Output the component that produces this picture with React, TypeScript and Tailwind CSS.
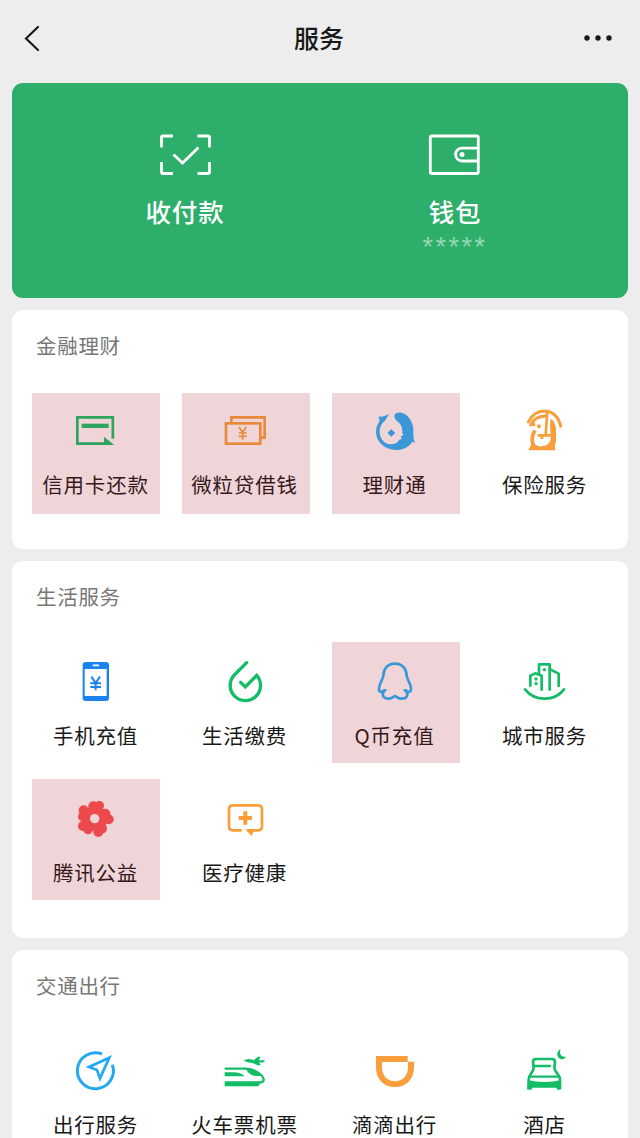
import type { ReactNode } from 'react';

type Service = {
  label: string;
  icon: ReactNode;
  highlighted?: boolean;
};

const GREEN = '#12bd66';
const ORANGE = '#fa9d3b';

function Glyph({ children }: { children: ReactNode }) {
  return (
    <svg className="block size-12 shrink-0" viewBox="0 0 144 144" fill="none">
      {children}
    </svg>
  );
}

function CreditCardIcon() {
  return (
    <Glyph>
      <path d="M125.500 95V31H19V110H112" stroke="#2fa45f" strokeWidth="8" />
      <path d="M32 50H113V63H32Z" fill="#2fa45f" />
      <path d="M99 89L130 114H99Z" fill="#2fa45f" />
    </Glyph>
  );
}

function LoanIcon() {
  return (
    <Glyph>
      <path d="M34 46V31H134V92H123" stroke="#e88a3a" strokeWidth="8" />
      <rect x="18" y="49" width="103" height="61" stroke="#e88a3a" strokeWidth="8" />
      <path d="M57 60L68 76L79 60M68 76V98M56 78H80M56 88H80" stroke="#e88a3a" strokeWidth="5" />
    </Glyph>
  );
}

function WealthIcon() {
  return (
    <Glyph>
      <path
        d="M26 28C36 32 47 26 57 21L45 41C34 49 28 62 29 77C31 99 46 112 65 112C76 111 84 106 87 99L95 96L92 88L101 84L97 79C98 64 95 56 88 48C80 41 70 33 74 23C79 14 94 15 105 22C120 32 129 48 130 67C130 84 129 94 135 108L127 104C117 120 99 129 78 129C45 129 19 106 18 76C18 62 22 51 29 43Z"
        fill="#3a97d8"
      />
      <path d="M64 68L74 78L64 88L54 78Z" fill="#3a97d8" stroke="#3a97d8" strokeWidth="3" strokeLinejoin="round" />
    </Glyph>
  );
}

function InsuranceIcon() {
  return (
    <Glyph>
      <path
        d="M88 32C101 38 108 52 108 68V106C103 113 104 120 107 130H26C26 122 33 119 33 111C29 94 31 80 40 68L50 72C43 84 40 98 43 107C47 116 56 119 66 118C80 117 90 108 92 96V86Z"
        fill={ORANGE}
      />
      <path d="M25 45C36 22 54 12 74 12C99 13 117 31 122 58" stroke={ORANGE} strokeWidth="9" strokeLinecap="round" />
      <path d="M33 53C38 40 52 28 76 27" stroke={ORANGE} strokeWidth="9" strokeLinecap="round" />
      <path d="M27 58L46 57L44 44L34 48Z" fill={ORANGE} />
      <circle cx="57" cy="58" r="6" fill={ORANGE} />
      <path d="M90 31L84 80" stroke="white" strokeWidth="5" />
      <path d="M82 14L77 84M53 85H92M66 85V96" stroke={ORANGE} strokeWidth="8" />
    </Glyph>
  );
}

function PhoneTopUpIcon() {
  return (
    <Glyph>
      <rect x="35" y="12" width="79" height="117" rx="9" fill="#1b83ee" />
      <path d="M41 33H107V114H41Z" fill="white" />
      <path d="M67 22H82" stroke="white" strokeWidth="5" strokeLinecap="round" />
      <path d="M61 56L74 75L87 56M74 75V97M58 76H90M58 87H90" stroke="#1b83ee" strokeWidth="6" />
    </Glyph>
  );
}

function UtilitiesIcon() {
  return (
    <Glyph>
      <path
        d="M80 14L43 51A45.500 45.500 0 1 0 110 52L76 87L62 73"
        stroke={GREEN}
        strokeWidth="10"
        strokeLinecap="round"
      />
    </Glyph>
  );
}

function QCoinIcon() {
  return (
    <Glyph>
      <path
        d="M46 97H42C35 104 27 103 27 93C27 76 39 65 40 53C40 32 53 17 75 17C97 17 110 32 110 53C111 65 123 76 123 93C123 103 115 104 108 97H104M42 99C34 111 40 122 56 122C66 122 69 116 75 114C81 116 84 122 95 122C111 122 116 111 108 99"
        stroke="#3a97d8"
        strokeWidth="8"
        strokeLinecap="round"
        strokeLinejoin="round"
      />
    </Glyph>
  );
}

function CityIcon() {
  return (
    <Glyph>
      <g stroke={GREEN} strokeWidth="8" strokeLinecap="round" strokeLinejoin="round">
        <path d="M15 94C44 131 104 131 132 94" />
        <path d="M31 83V53L46 46L65 53V95" />
        <path d="M57 46V19H89V95" />
        <path d="M92 35L116 47V84" />
      </g>
      <g fill={GREEN}>
        <circle cx="48" cy="63" r="5" />
        <circle cx="48" cy="77" r="5" />
        <circle cx="73" cy="35" r="5" />
      </g>
    </Glyph>
  );
}

function CharityIcon() {
  return (
    <Glyph>
      <g fill="#ec4a4c">
        <circle cx="72" cy="70" r="38" />
        <circle cx="67" cy="34" r="15" />
        <circle cx="85" cy="32" r="14" />
        <circle cx="103" cy="56" r="15" />
        <circle cx="113" cy="73" r="15" />
        <circle cx="94" cy="101" r="14" />
        <circle cx="82" cy="111" r="15" />
        <circle cx="51" cy="104" r="14" />
        <circle cx="36" cy="93" r="15" />
        <circle cx="35" cy="65" r="14" />
        <circle cx="38" cy="46" r="15" />
      </g>
      <circle cx="71" cy="71" r="14" fill="#efd5d7" />
    </Glyph>
  );
}

function MedicalIcon() {
  return (
    <Glyph>
      <path
        d="M65 106H39Q27 106 27 94V43Q27 31 39 31H114Q126 31 126 43V94Q126 106 114 106H82"
        stroke={ORANGE}
        strokeWidth="8"
      />
      <path d="M76 103L95 123L101 106Z" fill={ORANGE} />
      <path d="M76 49V89M56 69H96" stroke={ORANGE} strokeWidth="12" />
    </Glyph>
  );
}

function TravelIcon() {
  return (
    <Glyph>
      <path d="M93 21A54 54 0 1 0 124 53" stroke="#22a9f2" strokeWidth="9" />
      <path d="M115 32L54 60L78 69L87 94Z" stroke="#22a9f2" strokeWidth="8" />
    </Glyph>
  );
}

function TrainIcon() {
  return (
    <Glyph>
      <path d="M14 65H78C104 67 128 82 131 97C132 106 120 108 104 108" stroke={GREEN} strokeWidth="7" />
      <path d="M14 103H122L116 118H14Z" fill={GREEN} />
      <path d="M14 76H40C55 76 66 80 74 88H14Z" fill={GREEN} />
      <path d="M78 66C94 62 112 71 122 86C104 90 86 84 78 66Z" fill={GREEN} />
      <path d="M70 40L86 36L102 39L114 29L122 29L116 40L134 40C135 46 126 47 118 46L122 55L112 55L98 48L82 46Z" fill={GREEN} />
    </Glyph>
  );
}

function DidiIcon() {
  return (
    <Glyph>
      <path
        d="M18 27H113V44H132V62C132 96 108 120 75 120C42 120 18 96 18 62ZM36 45V60C36 86 52 103 75 103C98 103 114 86 114 60V45Z"
        fill={ORANGE}
        fillRule="evenodd"
      />
    </Glyph>
  );
}

function HotelIcon() {
  return (
    <Glyph>
      <path
        d="M26 126V97C26 84 41 74 41 62L39 45Q39 36 49 36H96Q105 36 105 45L103 62C103 74 120 84 120 97V126"
        stroke={GREEN}
        strokeWidth="8"
      />
      <path d="M42 57H90M28 89H118" stroke={GREEN} strokeWidth="7" strokeLinecap="round" />
      <path d="M24 99C50 107 96 107 122 99V128H112L109 122H37L34 128H22Z" fill={GREEN} />
      <path d="M122 7C108 12 108 34 124 37C130 37 135 34 138 29C125 32 116 21 122 7Z" fill={GREEN} />
    </Glyph>
  );
}

const finance: Service[] = [
  { label: '信用卡还款', icon: <CreditCardIcon />, highlighted: true },
  { label: '微粒贷借钱', icon: <LoanIcon />, highlighted: true },
  { label: '理财通', icon: <WealthIcon />, highlighted: true },
  { label: '保险服务', icon: <InsuranceIcon /> },
];

const living: Service[] = [
  { label: '手机充值', icon: <PhoneTopUpIcon /> },
  { label: '生活缴费', icon: <UtilitiesIcon /> },
  { label: 'Q币充值', icon: <QCoinIcon />, highlighted: true },
  { label: '城市服务', icon: <CityIcon /> },
  { label: '腾讯公益', icon: <CharityIcon />, highlighted: true },
  { label: '医疗健康', icon: <MedicalIcon /> },
];

const transport: Service[] = [
  { label: '出行服务', icon: <TravelIcon /> },
  { label: '火车票机票', icon: <TrainIcon /> },
  { label: '滴滴出行', icon: <DidiIcon /> },
  { label: '酒店', icon: <HotelIcon /> },
];

function ServiceTile({ service, compact }: { service: Service; compact?: boolean }) {
  return (
    <div
      className={`flex h-[121px] flex-col items-center pr-1 nth-[4n+1]:pr-0.5 ${
        compact ? 'pt-3.5' : 'pt-4'
      } ${service.highlighted ? 'bg-[#efd5d7] text-[#37191d]' : 'text-[#191919]'}`}
    >
      {service.icon}
      <span className="mt-[17px] ml-px text-[20.500px] leading-6 tracking-[0.8px] whitespace-nowrap">
        {service.label}
      </span>
    </div>
  );
}

function ServiceSection({
  title,
  services,
  className,
  compact,
}: {
  title: string;
  services: Service[];
  className: string;
  compact?: boolean;
}) {
  return (
    <section className={`mt-3 bg-white px-5 pt-5 ${className}`}>
      <h2 className="pl-1 text-[20.500px] leading-[30px] tracking-[0.7px] text-[#777]">{title}</h2>
      <div
        className={`grid grid-cols-[repeat(4,128px)] gap-x-[22px] gap-y-4 ${
          compact ? 'mt-[33px]' : 'mt-[31px]'
        }`}
      >
        {services.map((service) => (
          <ServiceTile key={service.label} service={service} compact={compact} />
        ))}
      </div>
    </section>
  );
}

export default function App() {
  return (
    <main className="h-[1138px] w-[640px] overflow-hidden bg-[#ededed] px-3 font-['Noto_Sans_CJK_SC',sans-serif]">
      <header className="flex h-[83px] items-start justify-between pt-[17px]">
        <svg className="ml-[11px] h-10 w-5" viewBox="0 0 20 40" fill="none">
          <path d="M15 10L3 21.500L15 33" stroke="#191919" strokeWidth="2.200" strokeLinecap="round" />
        </svg>
        <h1 className="ml-[11px] text-[25px] leading-10 font-medium text-[#191919]">服务</h1>
        <svg className="mr-4 h-10 w-7" viewBox="0 0 28 40" fill="#191919">
          <circle cx="3" cy="21" r="2.700" />
          <circle cx="14" cy="21" r="2.700" />
          <circle cx="25" cy="21" r="2.700" />
        </svg>
      </header>

      <section className="grid h-[215px] grid-cols-2 rounded-[11px] bg-[#2dae6b] px-[38px] pt-12 text-white">
        <div className="flex flex-col items-center">
          <svg className="h-12 w-[60px]" viewBox="0 0 60 48" fill="none" stroke="white" strokeWidth="2.800">
            <path d="M6.500 16.500V6.500Q6.500 5 8 5H18M42.500 5H53Q54.500 5 54.500 6.500V16.500M54.500 31V41Q54.500 42.500 53 42.500H42.500M18 42.500H8Q6.500 42.500 6.500 41V31" />
            <path d="M18.500 23.500L27.500 32L43.500 16.500" />
          </svg>
          <span className="mt-[13px] text-[25.500px] leading-[38px] font-medium tracking-[0.8px]">收付款</span>
        </div>
        <div className="flex flex-col items-center">
          <svg className="h-12 w-[60px]" viewBox="0 0 60 48" fill="none" stroke="white" strokeWidth="2.800">
            <rect x="5.300" y="5" width="48" height="37.500" rx="1.500" />
            <path d="M53 17.200H37A6.400 6.400 0 0 0 37 30H53" />
            <circle cx="37" cy="23.500" r="2.500" fill="white" stroke="none" />
          </svg>
          <span className="mt-[13px] text-[25.500px] leading-[38px] font-medium tracking-[0.8px]">钱包</span>
          <span className="mt-[3px] font-['Liberation_Sans'] text-[27px] leading-7 tracking-[2.500px] text-white/50">
            *****
          </span>
        </div>
      </section>

      <ServiceSection title="金融理财" services={finance} className="h-[239px] rounded-[11px]" compact />
      <ServiceSection title="生活服务" services={living} className="h-[377px] rounded-[11px]" />
      <ServiceSection title="交通出行" services={transport} className="h-[188px] rounded-t-[11px]" />
    </main>
  );
}
